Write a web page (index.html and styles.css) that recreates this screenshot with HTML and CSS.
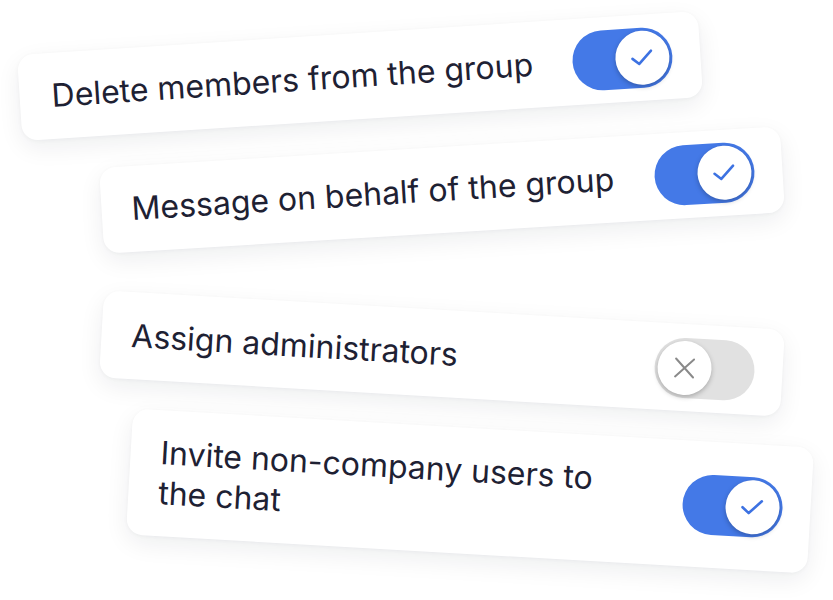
FILE: index.html
```html
<!DOCTYPE html>
<html lang="en">
<head>
    <meta charset="UTF-8">
    <meta name="viewport" content="width=device-width, initial-scale=1.0">
    <title>Group permissions</title>
    <link rel="stylesheet" href="styles.css">
</head>
<body>
    <div class="stack">
        <div class="perm perm-delete">
            <span class="perm-label">Delete members from the group</span>
            <span class="switch is-on">
                <span class="knob">
                    <svg width="24" height="24" viewBox="0 0 24 24"><polyline points="2,12.5 8.5,18 21,5.5"/></svg>
                </span>
            </span>
        </div>

        <div class="perm perm-message">
            <span class="perm-label">Message on behalf of the group</span>
            <span class="switch is-on">
                <span class="knob">
                    <svg width="24" height="24" viewBox="0 0 24 24"><polyline points="2,12.5 8.5,18 21,5.5"/></svg>
                </span>
            </span>
        </div>

        <div class="perm perm-admins">
            <span class="perm-label">Assign administrators</span>
            <span class="switch">
                <span class="knob">
                    <svg width="22" height="22" viewBox="0 0 22 22"><path d="M2 2 L20 20 M20 2 L2 20"/></svg>
                </span>
            </span>
        </div>

        <div class="perm perm-invite">
            <span class="perm-label">Invite non-company users to the chat</span>
            <span class="switch is-on">
                <span class="knob">
                    <svg width="24" height="24" viewBox="0 0 24 24"><polyline points="2,12.5 8.5,18 21,5.5"/></svg>
                </span>
            </span>
        </div>
    </div>
</body>
</html>
```

FILE: styles.css
```css
body {
    margin: 0;
    padding: 0;
    background: #fff;
    font-family: 'Inter', 'Noto Sans', sans-serif;
    overflow: hidden;
}
.stack {
    box-sizing: border-box;
    min-height: 100vh;
    display: flex;
    flex-direction: column;
    align-items: flex-start;
    padding-top: 33px;
}
.perm {
    box-sizing: border-box;
    width: 682px;
    height: 86px;
    display: flex;
    align-items: center;
    justify-content: space-between;
    gap: 20px;
    padding: 0 28px 0 30px;
    background: #fff;
    border-radius: 16px;
    box-shadow: 0 8px 24px rgba(20, 25, 45, 0.07), 0 1px 4px rgba(20, 25, 45, 0.04);
}
.perm-label {
    font-size: 32px;
    line-height: 40px;
    color: #1e2133;
    letter-spacing: 0;
    white-space: nowrap;
}
.perm-delete {
    margin-left: 19px;
    padding-left: 32px;
    transform: rotate(-3.7deg);
}
.perm-message {
    margin-left: 101px;
    margin-top: 28px;
    transform: rotate(-3.5deg);
}
.perm-admins {
    margin-left: 101px;
    margin-top: 77px;
    height: 87px;
    transform: rotate(3.3deg);
}
.perm-invite {
    margin-left: 129px;
    margin-top: 31px;
    height: 126px;
    transform: rotate(3.3deg);
}
.perm-invite .perm-label {
    white-space: normal;
    max-width: 460px;
}

/* toggle */
.switch {
    flex: none;
    box-sizing: border-box;
    width: 100px;
    height: 60px;
    padding: 3px;
    border-radius: 30px;
    background: #e1e1e1;
    display: flex;
    justify-content: flex-start;
}
.switch.is-on {
    background: #4479e7;
    justify-content: flex-end;
}
.knob {
    width: 54px;
    height: 54px;
    border-radius: 50%;
    background: #fff;
    display: flex;
    align-items: center;
    justify-content: center;
    box-shadow: 0 2px 5px rgba(0, 0, 0, 0.25);
}
.knob svg {
    fill: none;
    stroke-linecap: round;
    stroke-linejoin: round;
}
.is-on .knob svg {
    stroke: #3d72e2;
    stroke-width: 2.6;
}
.switch:not(.is-on) .knob svg {
    stroke: #8a8a8a;
    stroke-width: 2;
}
```
